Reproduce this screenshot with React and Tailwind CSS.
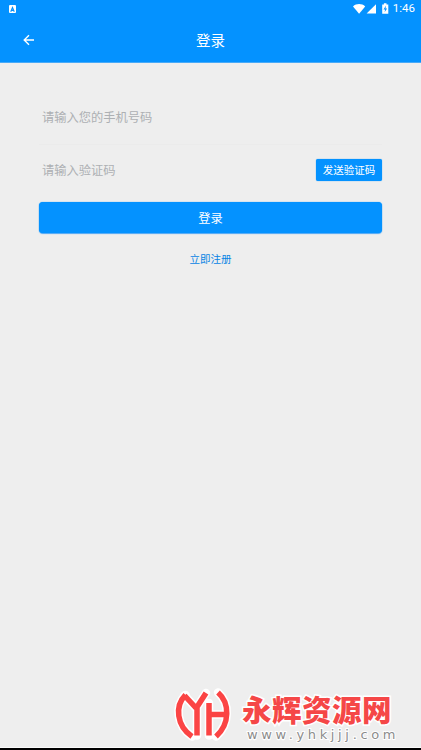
import React from 'react';

function StatusBar() {
  return (
    <div className="flex h-[18px] items-center justify-between pl-[9px] pr-[6px] text-white">
      <div className="flex h-2 w-[7px] items-center justify-center rounded-[1px] bg-white">
        <svg viewBox="0 0 8 8" className="h-[7px] w-[7px]" fill="none" stroke="#0492ff" strokeWidth="1.3">
          <path d="M2 6.5 4 1.8 6 6.5M2.8 5h2.4" />
        </svg>
      </div>
      <div className="flex items-center">
        {/* Wifi, signal, battery */}
        <svg viewBox="0 0 36 12" className="mr-1 h-3 w-9" fill="white">
          <path d="M0 3.5C3.2.3 9 .3 12.2 3.5L6.1 10.8Z" />
          <path d="M23 1.2V10.6H13.6Z" />
          <path d="M29.2 1.5h1.7V.3h2.6v1.2h1.8v9.2h-6.1Z" />
          <path d="M33 2.5 30.5 6.4h1.6L31.6 9.3 34.1 5.4h-1.6Z" fill="#0492ff" />
        </svg>
        <span className="font-[Roboto,sans-serif] text-[11.5px] leading-none">1:46</span>
      </div>
    </div>
  );
}

function Header() {
  return (
    <header className="h-[63px] border-b border-[#48aaf8] bg-[#0492ff]">
      <StatusBar />
      <div className="grid h-[44px] grid-cols-3 items-center">
        <button aria-label="back" className="ml-[23px] w-3 text-white">
          <svg viewBox="0 0 12 12" className="h-3 w-3" fill="none" stroke="currentColor" strokeWidth="1.4">
            <path d="M11 6H1.5M6 1.2 1.2 6 6 10.8" />
          </svg>
        </button>
        <h1 className="text-center text-[14.5px] text-white">登录</h1>
      </div>
    </header>
  );
}

function LoginForm() {
  return (
    <form className="flex flex-col px-[39px] pt-[29px]" onSubmit={(e) => e.preventDefault()}>
      <div className="flex h-[53px] items-center border-b border-[#ebebeb] pb-[2px] pl-[3px] text-[12.25px] text-[#adb0b3]">
        请输入您的手机号码
      </div>
      <div className="flex h-[50px] items-center justify-between pl-[3px]">
        <span className="text-[12.25px] text-[#adb0b3]">请输入验证码</span>
        <button className="h-[22px] w-[66px] rounded-[2px] bg-[#0492ff] text-[10.5px] whitespace-nowrap text-white shadow-[0_0_1px_#0492ff]">
          发送验证码
        </button>
      </div>
      <button className="mt-[7px] h-[31px] rounded-[4px] bg-[#0492ff] pt-px text-[12.25px] text-white shadow-[0_0_1px_#0492ff,0_1px_1px_#55aaf5]">
        登录
      </button>
      <button className="mt-[18px] text-[10.5px] leading-4 text-[#0884e4]">立即注册</button>
    </form>
  );
}

function LogoStrokes() {
  return (
    <>
      <path d="M13.5 9C2.5 20 4.500 40 20 50.5" />
      <path d="M12.5 9.5 24 22M34 7 25 21V49.500" />
      <path d="M37 17V49.500M37 28.500H54M46 6.500C58 17 58 38 44 50.500" />
    </>
  );
}

function Watermark() {
  return (
    <footer className="mt-auto flex h-[61px] items-start pl-[172px]">
      <svg viewBox="0 0 62 58" className="h-[58px] w-[62px] shrink-0" fill="none" strokeLinejoin="round">
        <g stroke="white" strokeWidth="8.5" strokeLinecap="round">
          <LogoStrokes />
        </g>
        <g stroke="#fb4444" strokeWidth="5.5">
          <LogoStrokes />
        </g>
      </svg>
      <div className="flex flex-col pl-2">
        <span className="mt-[6px] text-[29.5px] leading-[32px] font-black tracking-[0.5px] whitespace-nowrap text-[#f54747] [-webkit-text-stroke:3px_white] [paint-order:stroke_fill]">
          永辉资源网
        </span>
        <span className="mt-[4px] pl-[5px] font-['DejaVu_Sans',sans-serif] text-[13px] leading-[14px] tracking-[3.65px] whitespace-nowrap text-[#8c8c8c] [-webkit-text-stroke:2px_white] [paint-order:stroke_fill]">
          www.yhkjjj.com
        </span>
      </div>
    </footer>
  );
}

export default function App() {
  return (
    <div className="flex h-[750px] w-[421px] flex-col overflow-hidden border-b-2 border-black bg-[#eeeeee] font-['Noto_Sans_CJK_SC',sans-serif]">
      <Header />
      <LoginForm />
      <Watermark />
      <div className="h-px shrink-0 bg-[#fafafa]" />
    </div>
  );
}
